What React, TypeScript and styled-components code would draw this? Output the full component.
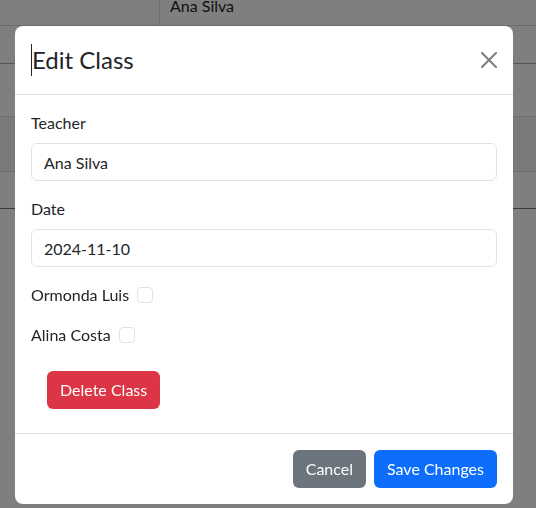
import React from "react";
import styled, { createGlobalStyle } from "styled-components";

const GlobalStyle = createGlobalStyle`
  html, body { margin: 0; padding: 0; }
  body {
    font-family: "Segoe UI", Lato, "Noto Sans", sans-serif;
    font-size: 16px;
    line-height: 1.5;
    color: #212529;
    background: #fff;
    overflow: hidden;
  }
  * { box-sizing: border-box; }
`;

const Page = styled.div`
  width: 536px;
  height: 508px;
  background: #fff;
`;

const Row = styled.div<{ $h: number; $line: string; $bg?: string }>`
  display: grid;
  grid-template-columns: 160px 1fr;
  grid-template-rows: minmax(0, 1fr);
  height: ${(p) => p.$h}px;
  border-bottom: 1px solid ${(p) => p.$line};
  background: ${(p) => p.$bg || "#fff"};
`;

const Cell = styled.div<{ $divider?: boolean }>`
  display: flex;
  align-items: flex-end;
  min-height: 0;
  padding: 0 10px 7px;
  border-right: ${(p) => (p.$divider ? "1px solid #dcdcdc" : "none")};
  white-space: nowrap;
`;

const Backdrop = styled.div`
  position: fixed;
  inset: 0;
  background: rgba(0, 0, 0, 0.5);
  padding: 26px 0 0 15px;
`;

const Dialog = styled.div`
  width: 498px;
  background: #fff;
  border-radius: 8px;
  display: flex;
  flex-direction: column;
`;

const Header = styled.div`
  display: flex;
  align-items: center;
  justify-content: space-between;
  padding: 16px;
  border-bottom: 1px solid #dee2e6;
`;

const Title = styled.h5`
  margin: 0;
  font-size: 24px;
  font-weight: 400;
  line-height: 36px;
  display: flex;
  align-items: center;
  &::before {
    content: "";
    width: 1px;
    height: 32px;
    background: #212529;
  }
`;

const CloseButton = styled.button`
  width: 16px;
  height: 16px;
  padding: 0;
  border: 0;
  background: transparent;
  display: flex;
  opacity: 0.5;
  cursor: pointer;
`;

const Body = styled.div`
  padding: 16px;
`;

const Group = styled.div`
  margin-bottom: 16px;
`;

const Label = styled.label`
  display: block;
  margin-bottom: 8px;
`;

const Input = styled.input`
  display: block;
  width: 100%;
  height: 38px;
  padding: 6px 12px;
  font: inherit;
  color: #212529;
  border: 1px solid #dee2e6;
  border-radius: 6px;
  background: #fff;
  outline: none;
`;

const CheckRow = styled.label`
  display: flex;
  align-items: center;
  gap: 8px;
  margin-bottom: 16px;
`;

const Check = styled.input`
  appearance: none;
  margin: 0;
  width: 16px;
  height: 16px;
  border: 1px solid #dee2e6;
  border-radius: 4px;
  background: #fff;
`;

const Actions = styled.div`
  padding: 8px 0 8px 16px;
`;

const Btn = styled.button<{ $variant: "danger" | "secondary" | "primary" }>`
  height: 38px;
  padding: 6px 12px;
  font: inherit;
  line-height: 24px;
  color: #fff;
  border: 1px solid transparent;
  border-radius: 6px;
  cursor: pointer;
  background: ${(p) =>
    p.$variant === "danger" ? "#dc3545" : p.$variant === "secondary" ? "#6c757d" : "#0d6efd"};
`;

const Footer = styled.div`
  display: flex;
  justify-content: flex-end;
  gap: 8px;
  padding: 16px;
  border-top: 1px solid #dee2e6;
`;

export default function App() {
  return (
    <>
      <GlobalStyle />
      <Page>
        <Row $h={26} $line="#d6d6d6">
          <Cell $divider />
          <Cell>Ana Silva</Cell>
        </Row>
        <Row $h={38} $line="#aaaaaa">
          <Cell $divider />
          <Cell />
        </Row>
        <Row $h={53} $line="#e2e2e2">
          <Cell $divider />
          <Cell />
        </Row>
        <Row $h={55} $line="#dcdcdc" $bg="#f4f4f4">
          <Cell $divider />
          <Cell />
        </Row>
        <Row $h={37} $line="#777777">
          <Cell $divider />
          <Cell />
        </Row>
      </Page>
      <Backdrop>
        <Dialog role="dialog">
          <Header>
            <Title>Edit Class</Title>
            <CloseButton aria-label="Close">
              <svg width="16" height="16" viewBox="0 0 16 16" fill="#000">
                <path d="M.293.293a1 1 0 0 1 1.414 0L8 6.586 14.293.293a1 1 0 1 1 1.414 1.414L9.414 8l6.293 6.293a1 1 0 0 1-1.414 1.414L8 9.414l-6.293 6.293a1 1 0 0 1-1.414-1.414L6.586 8 .293 1.707a1 1 0 0 1 0-1.414z" />
              </svg>
            </CloseButton>
          </Header>
          <Body>
            <Group>
              <Label>Teacher</Label>
              <Input type="text" defaultValue="Ana Silva" />
            </Group>
            <Group>
              <Label>Date</Label>
              <Input type="text" defaultValue="2024-11-10" />
            </Group>
            <CheckRow>
              Ormonda Luis
              <Check type="checkbox" />
            </CheckRow>
            <CheckRow>
              Alina Costa
              <Check type="checkbox" />
            </CheckRow>
            <Actions>
              <Btn $variant="danger">Delete Class</Btn>
            </Actions>
          </Body>
          <Footer>
            <Btn $variant="secondary">Cancel</Btn>
            <Btn $variant="primary">Save Changes</Btn>
          </Footer>
        </Dialog>
      </Backdrop>
    </>
  );
}
